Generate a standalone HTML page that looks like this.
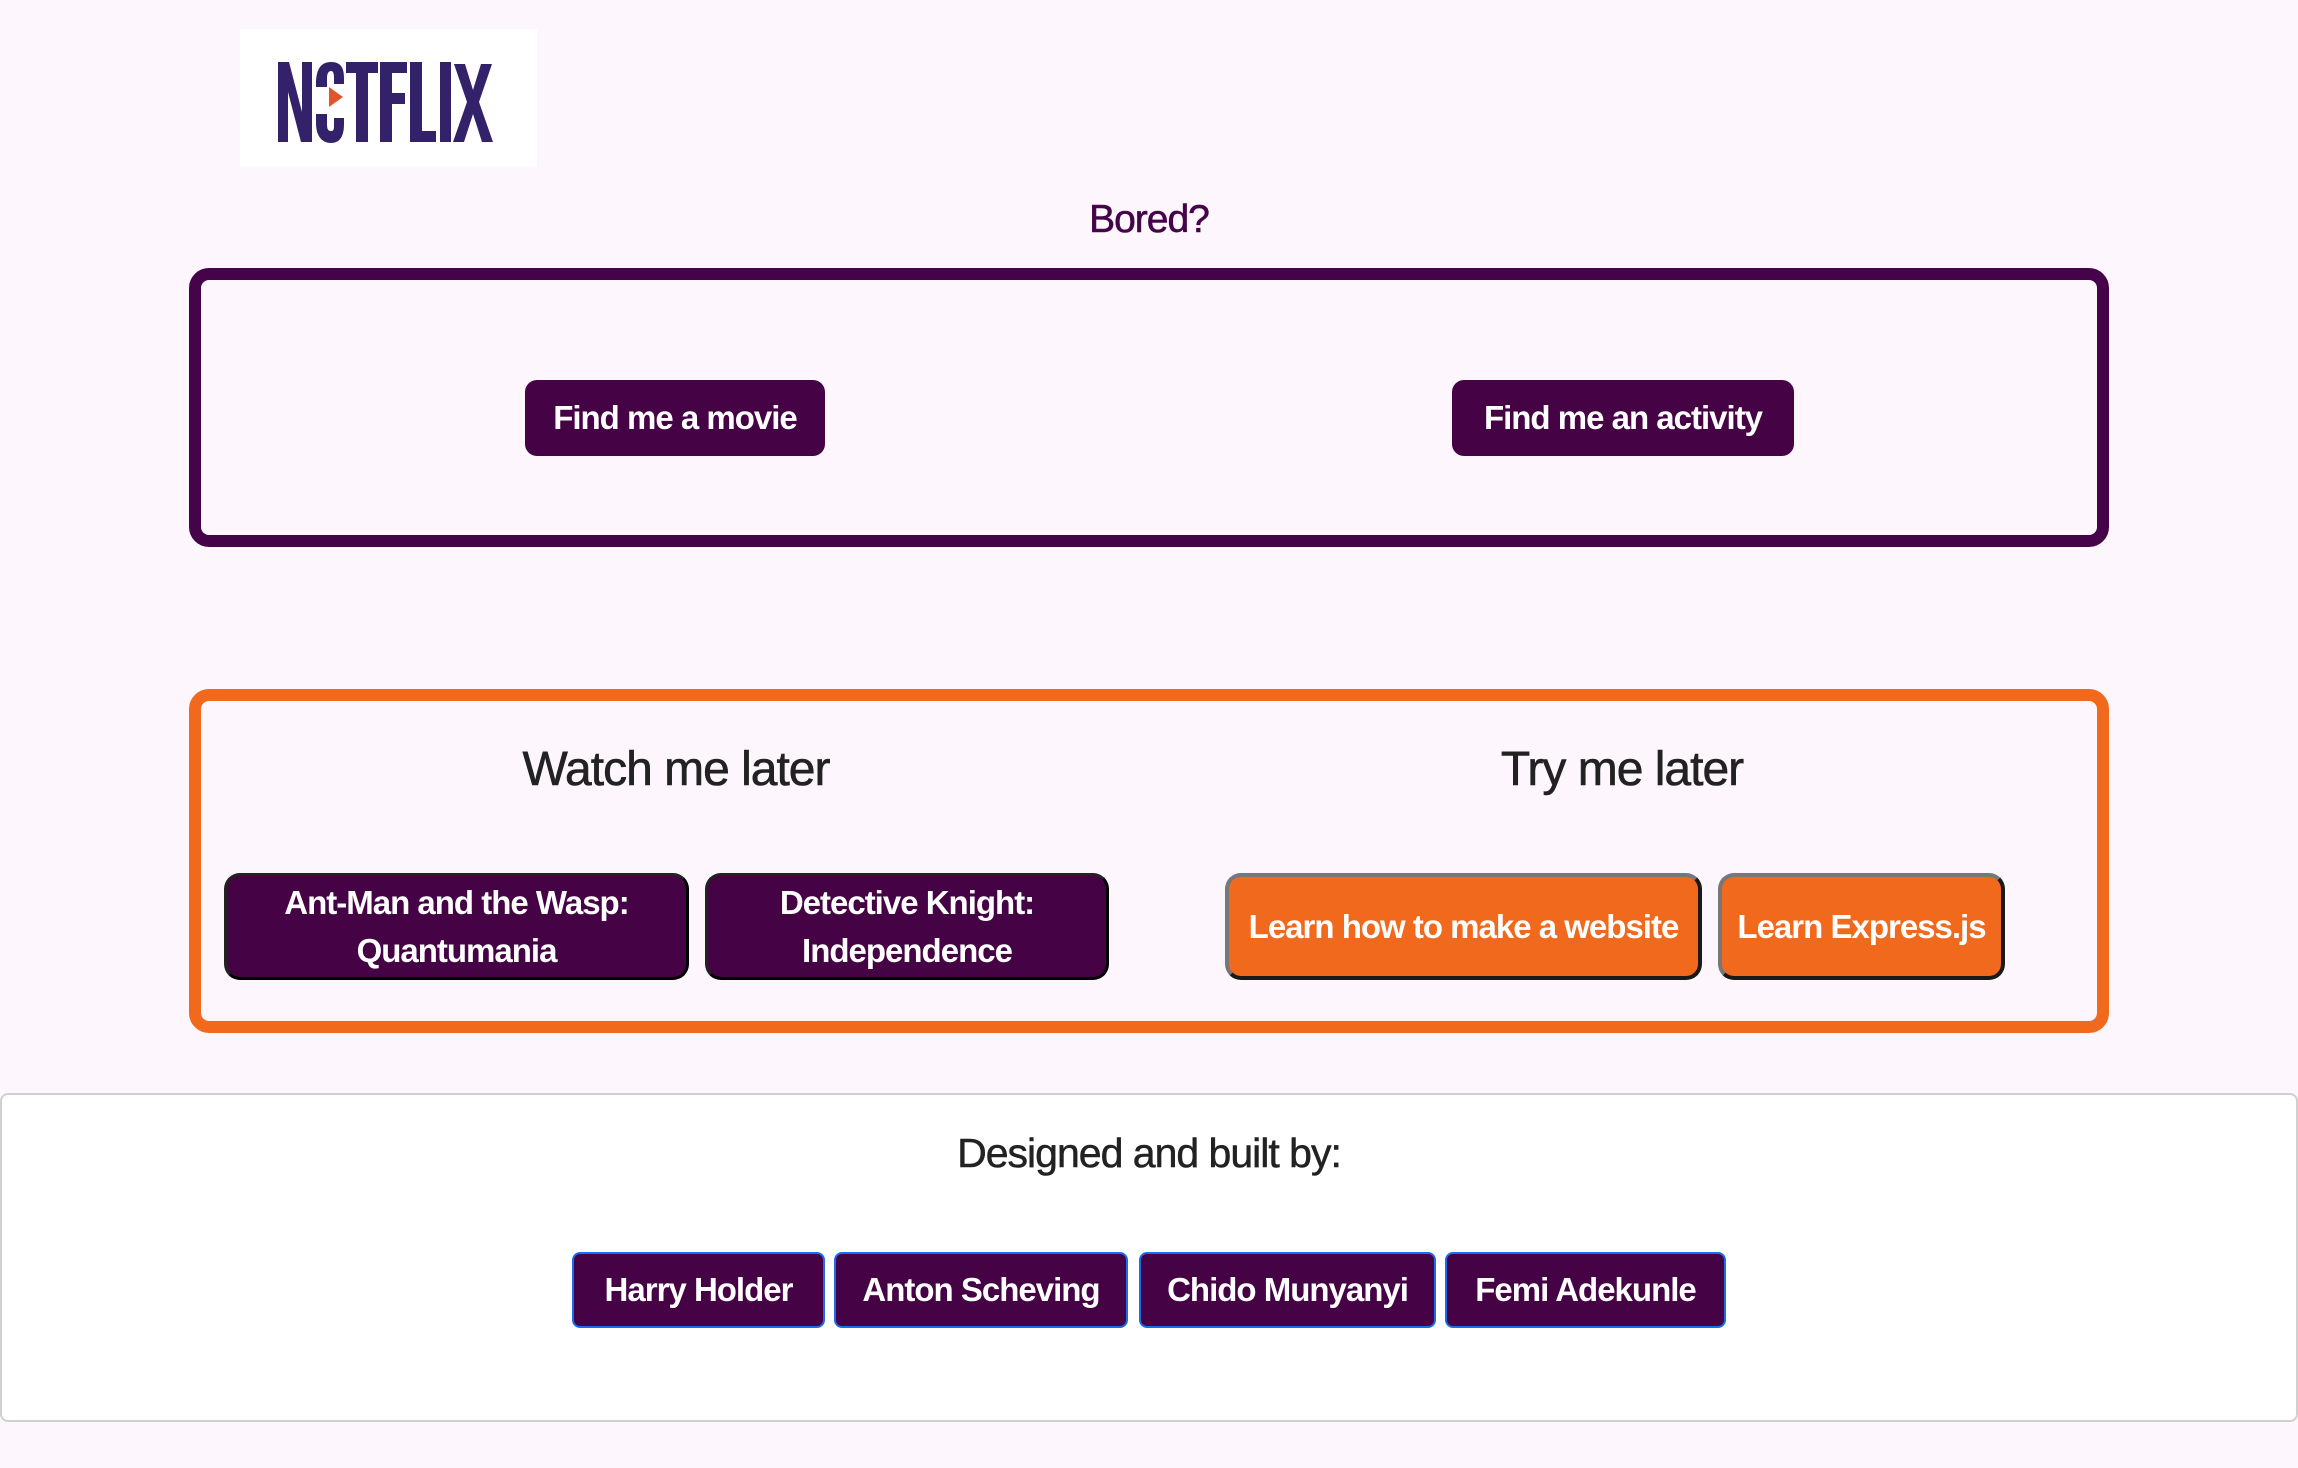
<!DOCTYPE html>
<html><head><meta charset="utf-8"><style>
*{box-sizing:border-box;margin:0;padding:0}
body{width:2298px;height:1468px;background:#fdf7fd;font-family:"Liberation Sans",sans-serif;position:relative;overflow:hidden}
.a{position:absolute}
.btn{position:absolute;display:flex;align-items:center;justify-content:center;text-align:center;background:#450346;color:#fff;font-weight:bold;font-size:33px;letter-spacing:-1px;border-radius:12px}
.mv{border:3px solid;border-color:#222 #000 #000 #222;border-radius:16px;line-height:48px}
.or{background:#f1691c;border:4px solid;border-color:#777 #1a1a1a #1a1a1a #777;border-radius:16px}
.ft{border:2px solid #1a6cf0;border-radius:8px}
.t{position:absolute;color:#222;font-size:48px;letter-spacing:-1px;transform:translateX(-50%);white-space:nowrap;-webkit-text-stroke:0.6px #222}
</style></head><body>
<div class="a" style="left:240px;top:29px;width:297px;height:138px;background:#fff">
<svg width="297" height="138" viewBox="0 0 297 138">
<g fill="#33226a">
<path d="M38 33h11l13 50V33h10v80H61L48 63v50H38z"/>
<path d="M76 55c0-15 5-22 15-22s13 6 13 16v6h-10v-6c0-5-1-7-3-7s-4 2-4 7v9H76z"/>
<path d="M76 85h11v10c0 5 1 7 4 7s3-2 3-7v-6h10v6c0 12-4 19-13 19s-15-7-15-20z"/>
<path d="M106 33h32v11h-10v69h-12V44h-10z"/>
<path d="M140 33h27v11h-15v20h13v11h-13v38h-12z"/>
<path d="M170 33h12v69h14v11h-26z"/>
<path d="M200 33h11v80h-11z"/>
<path d="M214 35h11l8 26 8-26h11l-13 38 14 40h-11l-9-28-9 28h-11l14-40z"/>
</g>
<path d="M89 58l14 10-14 10z" fill="#e0562a"/>
</svg>
</div>
<div class="a" style="left:0;width:2298px;top:198px;text-align:center;color:#45044a;font-size:39px;letter-spacing:-1px;-webkit-text-stroke:0.6px #45044a">Bored?</div>
<div class="a" style="left:189px;top:268px;width:1920px;height:279px;border:12px solid #45044a;border-radius:20px"></div>
<div class="btn" style="left:525px;top:380px;width:300px;height:76px">Find me a movie</div>
<div class="btn" style="left:1452px;top:380px;width:342px;height:76px">Find me an activity</div>
<div class="a" style="left:189px;top:689px;width:1920px;height:344px;border:12px solid #f1691c;border-radius:20px"></div>
<div class="t" style="left:676px;top:742px">Watch me later</div>
<div class="t" style="left:1622px;top:742px">Try me later</div>
<div class="btn mv" style="left:224px;top:873px;width:465px;height:107px">Ant-Man and the Wasp:<br>Quantumania</div>
<div class="btn mv" style="left:705px;top:873px;width:404px;height:107px">Detective Knight:<br>Independence</div>
<div class="btn or" style="left:1225px;top:873px;width:477px;height:107px">Learn how to make a website</div>
<div class="btn or" style="left:1718px;top:873px;width:287px;height:107px">Learn Express.js</div>
<div class="a" style="left:0;top:1093px;width:2298px;height:329px;background:#fff;border:2px solid #d0d0d0;border-radius:8px"></div>
<div class="a" style="left:0;width:2298px;top:1130px;text-align:center;color:#222;font-size:41px;letter-spacing:-1px;-webkit-text-stroke:0.5px #222">Designed and built by:</div>
<div class="btn ft" style="left:572px;top:1252px;width:253px;height:76px">Harry Holder</div>
<div class="btn ft" style="left:834px;top:1252px;width:294px;height:76px">Anton Scheving</div>
<div class="btn ft" style="left:1139px;top:1252px;width:297px;height:76px">Chido Munyanyi</div>
<div class="btn ft" style="left:1445px;top:1252px;width:281px;height:76px">Femi Adekunle</div>
</body></html>
